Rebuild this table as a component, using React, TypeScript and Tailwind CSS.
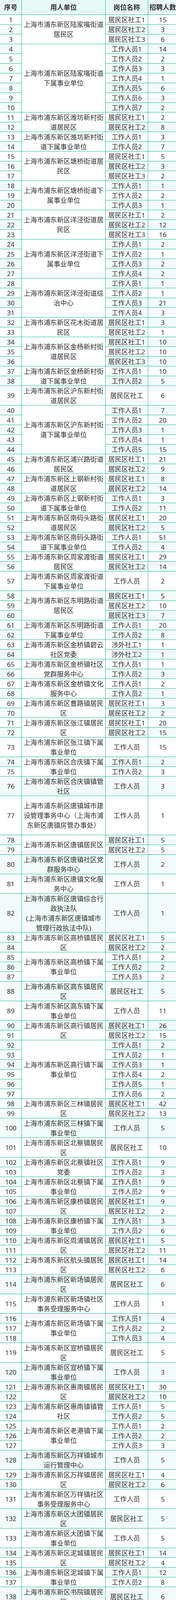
type Row = [string, number, number?];
type Group = { name: string; rows: Row[] };

const groups: Group[] = [
  { name: '上海市浦东新区陆家嘴街道居民区', rows: [['居民区社工1', 15], ['居民区社工2', 3], ['居民区社工3', 6]] },
  {
    name: '上海市浦东新区陆家嘴街道下属事业单位',
    rows: [['工作人员1', 14], ['工作人员2', 2], ['工作人员3', 3], ['工作人员4', 1], ['工作人员5', 6], ['工作人员6', 3], ['工作人员7', 2]],
  },
  { name: '上海市浦东新区潍坊新村街道居民区', rows: [['居民区社工1', 2], ['居民区社工2', 8]] },
  { name: '上海市浦东新区潍坊新村街道下属事业单位', rows: [['工作人员1', 3], ['工作人员2', 7]] },
  { name: '上海市浦东新区塘桥街道居民区', rows: [['居民区社工1', 5], ['居民区社工2', 3], ['居民区社工3', 2]] },
  { name: '上海市浦东新区塘桥街道下属事业单位', rows: [['工作人员1', 1], ['工作人员2', 2], ['工作人员3', 1]] },
  { name: '上海市浦东新区洋泾街道居民区', rows: [['居民区社工1', 2], ['居民区社工2', 12], ['居民区社工3', 16]] },
  { name: '上海市浦东新区洋泾街道下属事业单位', rows: [['工作人员1', 2], ['工作人员2', 1], ['工作人员3', 2], ['工作人员4', 2]] },
  { name: '上海市浦东新区洋泾街道综治中心', rows: [['工作人员1', 1], ['工作人员2', 1], ['工作人员3', 21], ['工作人员4', 3]] },
  { name: '上海市浦东新区花木街道居民区', rows: [['居民区社工1', 3], ['居民区社工2', 1]] },
  { name: '上海市浦东新区金杨新村街道居民区', rows: [['居民区社工1', 10], ['居民区社工2', 10], ['居民区社工3', 10]] },
  { name: '上海市浦东新区金杨新村街道下属事业单位', rows: [['工作人员1', 10], ['工作人员2', 5]] },
  { name: '上海市浦东新区沪东新村街道居民区', rows: [['居民区社工', 6, 2]] },
  {
    name: '上海市浦东新区沪东新村街道下属事业单位',
    rows: [['工作人员1', 7], ['工作人员2', 20], ['工作人员3', 1], ['工作人员4', 1], ['工作人员5', 15]],
  },
  { name: '上海市浦东新区浦兴路街道居民区', rows: [['居民区社工1', 21], ['居民区社工2', 9]] },
  { name: '上海市浦东新区上钢新村街道居民区', rows: [['居民区社工1', 8], ['居民区社工2', 14]] },
  { name: '上海市浦东新区上钢新村街道下属事业单位', rows: [['工作人员1', 3], ['工作人员2', 11]] },
  { name: '上海市浦东新区南码头路街道居民区', rows: [['居民区社工1', 20], ['居民区社工2', 5]] },
  { name: '上海市浦东新区南码头路街道下属事业单位', rows: [['工作人员1', 51], ['工作人员2', 4]] },
  { name: '上海市浦东新区周家渡街道居民区', rows: [['居民区社工1', 29], ['居民区社工2', 14]] },
  { name: '上海市浦东新区周家渡街道下属事业单位', rows: [['工作人员', 2, 2]] },
  { name: '上海市浦东新区东明路街道居民区', rows: [['居民区社工1', 5], ['居民区社工2', 10], ['居民区社工3', 7]] },
  { name: '上海市浦东新区东明路街道下属事业单位', rows: [['工作人员1', 20], ['工作人员2', 8]] },
  { name: '上海市浦东新区金桥镇碧云社区党委', rows: [['涉外社工1', 1], ['涉外社工2', 1]] },
  { name: '上海市浦东新区金桥镇社区党群服务中心', rows: [['工作人员1', 1], ['工作人员2', 3]] },
  { name: '上海市浦东新区金桥镇文化服务中心', rows: [['工作人员1', 2], ['工作人员2', 1]] },
  { name: '上海市浦东新区曹路镇居民区', rows: [['居民区社工1', 3], ['居民区社工2', 2]] },
  { name: '上海市浦东新区张江镇居民区', rows: [['居民区社工1', 20], ['居民区社工2', 15]] },
  { name: '上海市浦东新区张江镇下属事业单位', rows: [['工作人员', 15, 2]] },
  { name: '上海市浦东新区合庆镇下属事业单位', rows: [['工作人员1', 2], ['工作人员2', 3]] },
  { name: '上海市浦东新区合庆镇镇管社区', rows: [['工作人员', 3, 2]] },
  { name: '上海市浦东新区唐镇城市建设管理事务中心（上海市浦东新区唐镇房管办事处）', rows: [['工作人员', 1, 4]] },
  { name: '上海市浦东新区唐镇居民区', rows: [['居民区社工1', 5], ['居民区社工2', 5]] },
  { name: '上海市浦东新区唐镇社区党群服务中心', rows: [['工作人员', 2, 2]] },
  { name: '上海市浦东新区唐镇文化服务中心', rows: [['工作人员', 1, 2]] },
  { name: '上海市浦东新区唐镇综合行政执法队\n(上海市浦东新区唐镇城市管理行政执法中队)', rows: [['工作人员', 1, 4]] },
  { name: '上海市浦东新区高桥镇居民区', rows: [['居民区社工1', 5], ['居民区社工2', 2]] },
  { name: '上海市浦东新区高桥镇下属事业单位', rows: [['工作人员1', 2], ['工作人员2', 2], ['工作人员3', 2]] },
  { name: '上海市浦东新区高东镇居民区', rows: [['居民区社工', 5, 2]] },
  { name: '上海市浦东新区高东镇下属事业单位', rows: [['工作人员', 11, 2]] },
  { name: '上海市浦东新区高行镇居民区', rows: [['居民区社工1', 26], ['居民区社工2', 15]] },
  {
    name: '上海市浦东新区高行镇下属事业单位',
    rows: [['工作人员1', 2], ['工作人员2', 1], ['工作人员3', 1], ['工作人员4', 2], ['工作人员5', 1], ['工作人员6', 2]],
  },
  { name: '上海市浦东新区三林镇居民区', rows: [['居民区社工1', 42], ['居民区社工2', 13]] },
  { name: '上海市浦东新区三林镇下属事业单位', rows: [['工作人员', 5, 2]] },
  { name: '上海市浦东新区北蔡镇居民区', rows: [['居民区社工', 10, 2]] },
  { name: '上海市浦东新区北蔡镇社区党委', rows: [['工作人员1', 9], ['工作人员2', 3]] },
  { name: '上海市浦东新区北蔡镇下属事业单位', rows: [['工作人员1', 9], ['工作人员2', 9]] },
  { name: '上海市浦东新区康桥镇居民区', rows: [['居民区社工1', 9], ['居民区社工2', 2]] },
  { name: '上海市浦东新区康桥镇下属事业单位', rows: [['工作人员1', 3], ['工作人员2', 6]] },
  { name: '上海市浦东新区周浦镇居民区', rows: [['居民区社工1', 5], ['居民区社工2', 11]] },
  { name: '上海市浦东新区航头镇居民区', rows: [['居民区社工1', 14], ['居民区社工2', 6]] },
  { name: '上海市浦东新区新场镇居民区', rows: [['居民区社工', 6, 2]] },
  { name: '上海市浦东新区新场镇社区事务受理服务中心', rows: [['工作人员', 1, 2]] },
  { name: '上海市浦东新区新场镇下属事业单位', rows: [['工作人员1', 4], ['工作人员2', 2], ['工作人员3', 4]] },
  { name: '上海市浦东新区宣桥镇居民区', rows: [['居民区社工', 5, 2]] },
  { name: '上海市浦东新区宣桥镇下属事业单位', rows: [['工作人员', 3, 2]] },
  { name: '上海市浦东新区惠南镇居民区', rows: [['居民区社工1', 30], ['居民区社工2', 10]] },
  { name: '上海市浦东新区惠南镇镇管社区', rows: [['工作人员1', 5], ['工作人员2', 5]] },
  { name: '上海市浦东新区老港镇下属事业单位', rows: [['工作人员1', 2], ['工作人员2', 2], ['工作人员3', 3]] },
  { name: '上海市浦东新区万祥镇城市运行管理中心', rows: [['工作人员', 5, 2]] },
  { name: '上海市浦东新区万祥镇居民区', rows: [['居民区社工1', 4], ['居民区社工2', 6]] },
  { name: '上海市浦东新区万祥镇社区事务受理服务中心', rows: [['工作人员', 5, 2]] },
  { name: '上海市浦东新区大团镇居民区', rows: [['居民区社工', 5, 2]] },
  { name: '上海市浦东新区大团镇下属事业单位', rows: [['工作人员', 5, 2]] },
  { name: '上海市浦东新区泥城镇居民区', rows: [['居民区社工1', 14], ['居民区社工2', 4]] },
  { name: '上海市浦东新区泥城镇下属事业单位', rows: [['工作人员1', 12], ['工作人员2', 8]] },
  { name: '上海市浦东新区书院镇居民区', rows: [['居民区社工', 6, 2]] },
  { name: '上海市浦东新区书院镇下属事业单位', rows: [['工作人员1', 6], ['工作人员2', 5], ['工作人员3', 3]] },
  { name: '上海市浦东新区川沙新镇居民区', rows: [['居民区社工', 22, 2]] },
  { name: '上海市浦东新区川沙新镇下属事业单位', rows: [['工作人员1', 15], ['工作人员2', 13]] },
  { name: '上海市浦东新区祝桥镇城市运行管理中心（上海市浦东新区祝桥镇应急管理中心）', rows: [['工作人员', 3, 4]] },
  { name: '上海市浦东新区祝桥镇居民区', rows: [['居民区社工1', 6], ['居民区社工2', 4]] },
  { name: '上海市浦东新区祝桥镇社区事务受理服务中心（上海市浦东新区祝桥镇退役军人服务站）', rows: [['工作人员', 5, 4]] },
  { name: '上海市浦东新区南汇新城镇城市运行管理中心（上海市浦东新区南汇新城镇应急管理中心）', rows: [['工作人员', 4, 4]] },
  { name: '上海市浦东新区南汇新城镇居民区', rows: [['顶科居民区社工1', 2, 2], ['顶科居民区社工2', 17, 2], ['申港居民区社工', 18, 2]] },
  { name: '上海市浦东新区南汇新城镇芦潮港社区', rows: [['工作人员', 5, 2]] },
  { name: '上海市浦东新区南汇新城镇社区党群服务中心(上海市浦东新区南汇新城镇文化服务中心)', rows: [['工作人员', 2, 4]] },
  {
    name: '上海市浦东新区南汇新城镇社区事务受理服务中心（上海市浦东新区南汇新城镇退役军人服务站）',
    rows: [['工作人员1', 9], ['工作人员2', 1], ['工作人员3', 2], ['工作人员4', 1]],
  },
];

// grid row spans, written out so Tailwind sees every name
const spans: Record<number, string> = {
  1: 'row-span-1',
  2: 'row-span-2',
  3: 'row-span-3',
  4: 'row-span-4',
  5: 'row-span-5',
  6: 'row-span-6',
  7: 'row-span-7',
};

const cell = 'flex flex-col items-center justify-center border-b border-r border-[#1bbc9b] text-center leading-[25px]';
const stripe = 'bg-[#f2fbf9]';

// break a label the way the sheet does: a fixed count of full-width
// characters per line, half-width ones count as half
function lines(s: string, max: number): string[] {
  const out: string[] = [];
  for (const part of s.split('\n')) {
    let cur = '';
    let w = 0;
    for (const ch of part) {
      const cw = ch.charCodeAt(0) < 128 ? 0.5 : 1;
      if (w + cw > max) {
        out.push(cur);
        cur = '';
        w = 0;
      }
      cur += ch;
      w += cw;
    }
    if (cur) out.push(cur);
  }
  return out;
}

function Lines({ value, max }: { value: string; max: number }) {
  return (
    <>
      {lines(value, max).map((l, i) => (
        <span key={i} className="block whitespace-nowrap">
          {l}
        </span>
      ))}
    </>
  );
}

export default function App() {
  let seq = 0;
  const cells = groups.flatMap((g) => {
    const total = g.rows.reduce((n, r) => n + (r[2] ?? 1), 0);
    return g.rows.flatMap(([post, count, units = 1], i) => {
      seq += 1;
      const bg = seq % 2 === 0 ? stripe : 'bg-white';
      const out = [
        <div key={`s${seq}`} className={`${cell} col-start-1 ${spans[units]} ${bg}`}>
          {seq}
        </div>,
      ];
      if (i === 0) {
        out.push(
          <div key={`n${seq}`} className={`${cell} col-start-2 ${spans[total]} ${g.rows.length > 1 ? 'bg-white' : bg}`}>
            <Lines value={g.name} max={12} />
          </div>
        );
      }
      out.push(
        <div key={`p${seq}`} className={`${cell} col-start-3 ${spans[units]} ${bg}`}>
          <Lines value={post} max={6} />
        </div>,
        <div key={`c${seq}`} className={`${cell} col-start-4 ${spans[units]} ${bg}`}>
          {count}
        </div>
      );
      return out;
    });
  });

  return (
    <div className="w-[450px] overflow-hidden bg-white font-['Noto_Sans','Noto_Sans_CJK_SC',sans-serif] text-[17px] text-[#333333]">
      <div className="grid w-[454px] grid-cols-[56px_214px_109px_75px] grid-rows-[38px] auto-rows-[25px]">
        {['序号', '用人单位', '岗位名称', '招聘人数'].map((h) => (
          <div key={h} className={`${cell} bg-[#e6f9f6] font-bold whitespace-nowrap`}>
            {h}
          </div>
        ))}
        {cells}
      </div>
    </div>
  );
}
